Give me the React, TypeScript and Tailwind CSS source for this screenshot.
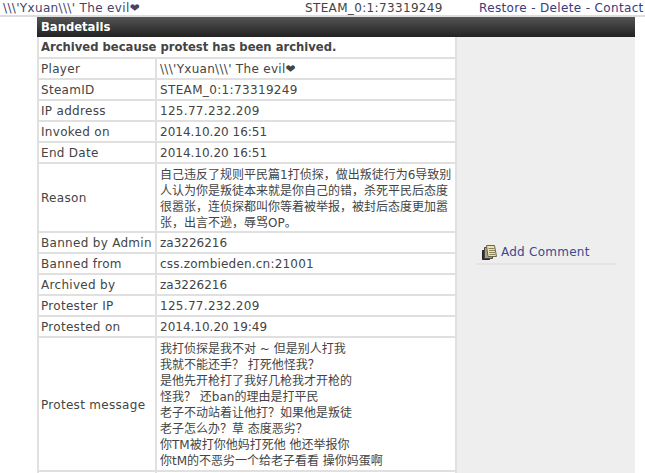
const font = { fontFamily: '"DejaVu Sans", "Noto Sans CJK SC", sans-serif' };

const Row = ({ label, children, className = 'h-[21px] pt-[2px] leading-[17px]' }: { label?: string; children?: React.ReactNode; className?: string }) => (
  <tr>
    <td className="w-[120px] border-x-2 border-b-2 border-[#e0e0e0] pl-[2px] pt-[2px] align-middle leading-[17px] tracking-[0.3px] whitespace-nowrap">{label}</td>
    <td className={`border-r-2 border-b-2 border-[#e0e0e0] pl-[3px] pr-[2px] align-middle ${className}`}>{children}</td>
  </tr>
);

const NoteIcon = () => (
  <svg width="17" height="17" viewBox="0 0 17 17" className="shrink-0">
    <path d="M1.5 6.5h7v9h-7z" fill="#333" stroke="#222" />
    <path d="M3.5 3.500h8v11h-8z" fill="#a8a08a" stroke="#444" />
    <path d="M5.500 1.500h8l2 11h-8.500z" fill="#efe4a6" stroke="#6b6548" />
    <path d="M7.500 4.500h6M8 6.500h6M8 8.500h6M8.500 10.500h6" stroke="#8a8260" />
  </svg>
);

export default function App() {
  return (
    <div style={font} className="h-[473px] w-[645px] overflow-hidden bg-white text-[12px] leading-[19px] text-[#444]">
      <div className="grid h-[17px] grid-cols-[302px_174px_1fr] border-b-2 border-[#ddd] pl-[3px] pt-[1px] leading-[14px] tracking-[0.35px]">
        <span className="text-[#44446a]">\\\'Yxuan\\\' The evil❤</span>
        <span>STEAM_0:1:73319249</span>
        <span className="whitespace-nowrap text-[#3a3a7e]">Restore - Delete - Contact</span>
      </div>
      <div className="ml-[37px] w-[598px]">
        <div className="flex h-[20px] items-center bg-gradient-to-b from-[#555] to-[#222] pl-[4px] text-[11.6px] font-bold text-white">Bandetails</div>
        <div className="flex bg-[#eee]">
          <table className="w-[420px] border-separate border-spacing-0 bg-white">
            <tbody>
              <tr>
                <td colSpan={2} className="h-[22px] border-x-2 border-b-2 border-[#e0e0e0] pl-[2px] pt-[1px] text-[11.6px] font-bold">Archived because protest has been archived.</td>
              </tr>
              <Row label="Player"><span className="tracking-[0.3px]">\\\'Yxuan\\\' The evil❤</span></Row>
              <Row label="SteamID"><span className="tracking-[0.35px]">STEAM_0:1:73319249</span></Row>
              <Row label="IP address"><span className="tracking-[0.3px]">125.77.232.209</span></Row>
              <Row label="Invoked on">2014.10.20 16:51</Row>
              <Row label="End Date">2014.10.20 16:51</Row>
              <Row label="Reason" className="pt-[3px] leading-[16px]">自己违反了规则平民篇1打侦探，做出叛徒行为6导致别人认为你是叛徒本来就是你自己的错，杀死平民后态度很嚣张，连侦探都叫你等着被举报，被封后态度更加嚣张，出言不逊，辱骂OP。</Row>
              <Row label="Banned by Admin">za3226216</Row>
              <Row label="Banned from"><span className="tracking-[0.2px]">css.zombieden.cn:21001</span></Row>
              <Row label="Archived by">za3226216</Row>
              <Row label="Protester IP"><span className="tracking-[0.3px]">125.77.232.209</span></Row>
              <Row label="Protested on">2014.10.20 19:49</Row>
              <Row label="Protest message" className="pt-[3px] pb-[1px] leading-[16px]">
                我打侦探是我不对 ~ 但是别人打我<br />
                我就不能还手？ 打死他怪我？<br />
                是他先开枪打了我好几枪我才开枪的<br />
                怪我？ 还ban的理由是打平民<br />
                老子不动站着让他打？如果他是叛徒<br />
                老子怎么办？草 态度恶劣？<br />
                你TM被打你他妈打死他 他还举报你<br />
                你tM的不恶劣一个给老子看看 操你妈蛋啊
              </Row>
              <Row />
            </tbody>
          </table>
          <div className="flex-1 pt-[206px]">
            <div className="ml-[19px] flex w-[140px] items-center gap-[3px] border-b-2 border-[#e4e4e4] pb-[1px] pl-[5px] tracking-[0.25px] text-[#3a4a8e]">
              <NoteIcon />
              <span>Add Comment</span>
            </div>
          </div>
        </div>
      </div>
    </div>
  );
}
